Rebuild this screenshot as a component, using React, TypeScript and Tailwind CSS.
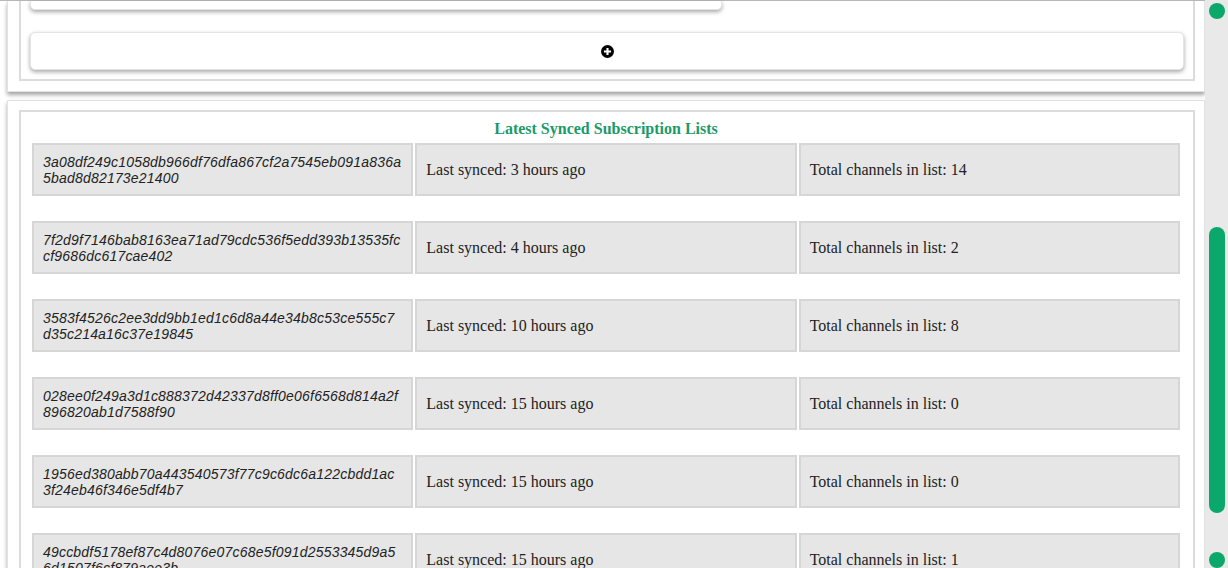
import React from 'react';

type SyncedList = {
  hash: [string, string];
  synced: string;
  channels: number;
};

const lists: SyncedList[] = [
  { hash: ['3a08df249c1058db966df76dfa867cf2a7545eb091a836a', '5bad8d82173e21400'], synced: '3 hours ago', channels: 14 },
  { hash: ['7f2d9f7146bab8163ea71ad79cdc536f5edd393b13535fc', 'cf9686dc617cae402'], synced: '4 hours ago', channels: 2 },
  { hash: ['3583f4526c2ee3dd9bb1ed1c6d8a44e34b8c53ce555c7', 'd35c214a16c37e19845'], synced: '10 hours ago', channels: 8 },
  { hash: ['028ee0f249a3d1c888372d42337d8ff0e06f6568d814a2f', '896820ab1d7588f90'], synced: '15 hours ago', channels: 0 },
  { hash: ['1956ed380abb70a443540573f77c9c6dc6a122cbdd1ac', '3f24eb46f346e5df4b7'], synced: '15 hours ago', channels: 0 },
  { hash: ['49ccbdf5178ef87c4d8076e07c68e5f091d2553345d9a5', '6d1507f6cf879aee3b'], synced: '15 hours ago', channels: 1 },
];

const PlusCircle: React.FC = () => (
  <svg width="13" height="13" viewBox="0 0 16 16" aria-hidden="true">
    <circle cx="8" cy="8" r="8" fill="#000" />
    <path d="M8 3.6v8.8M3.6 8h8.8" stroke="#fff" strokeWidth="2.6" />
  </svg>
);

const cell = 'flex-1 min-w-0 flex items-center bg-[#e6e6e6] border-2 border-[#d6d6d6] pl-[9px] pr-2';

const App: React.FC = () => {
  return (
    <div className="flex h-[568px] overflow-hidden bg-white">
      <div className="flex-1 min-w-0 border-t border-[#b9b9b9]">
        {/* Channel list panel, scrolled mostly out of view */}
        <div className="ml-[7px] border-x border-b border-[#e2e2e2] bg-white pb-[10px] shadow-[0_3px_4px_rgba(0,0,0,0.35)]">
          <div className="ml-[11px] mr-[9px] border-x-2 border-b-2 border-[#dcdcdc] pl-[9px] pr-[9px] pb-[9px]">
            <div className="h-[9px] w-[692px] rounded-b-[5px] border-x border-b border-[#e4e4e4] bg-white shadow-[0_2px_4px_rgba(0,0,0,0.35)]" />
            <button className="mt-[22px] flex h-[38px] w-full items-center justify-center rounded-[5px] border border-[#e4e4e4] bg-white shadow-[0_2px_4px_rgba(0,0,0,0.35)]">
              <PlusCircle />
            </button>
          </div>
        </div>

        {/* Latest synced lists */}
        <div className="ml-[7px] mt-[8px] border border-[#e2e2e2] bg-white pt-[9px] shadow-[0_3px_4px_rgba(0,0,0,0.35)]">
          <div className="ml-[11px] mr-[9px] border-2 border-[#dcdcdc] pl-[11px] pr-[13px]">
            <h2 className="pt-[8px] mb-[5px] text-center text-[16px] leading-[18px] font-bold text-[#1b9a69] font-['Liberation_Serif',serif]">
              Latest Synced Subscription Lists
            </h2>
            {lists.map((item) => (
              <div key={item.hash[0]} className="mb-[25px] flex h-[53px] gap-[2px]">
                <div className={`${cell} font-['Liberation_Sans',Arial,sans-serif] text-[14px] leading-[16px] italic tracking-[0.2px] text-[#222]`}>
                  <div>
                    <div className="whitespace-nowrap">{item.hash[0]}</div>
                    <div className="whitespace-nowrap">{item.hash[1]}</div>
                  </div>
                </div>
                <div className={`${cell} font-['Liberation_Serif',serif] text-[16px] text-[#222]`}>
                  Last synced: {item.synced}
                </div>
                <div className={`${cell} font-['Liberation_Serif',serif] text-[16px] text-[#222]`}>
                  Total channels in list: {item.channels}
                </div>
              </div>
            ))}
          </div>
        </div>
      </div>

      {/* Custom scrollbar */}
      <div className="flex w-[23px] shrink-0 flex-col items-center bg-[#e9e9e9] pt-[3px]">
        <div className="h-[16px] w-[16px] rounded-full bg-[#0aa86a]" />
        <div className="mt-[208px] h-[286px] w-[16px] rounded-full bg-[#0aa86a]" />
        <div className="mt-[39px] h-[16px] w-[16px] rounded-full bg-[#0aa86a]" />
      </div>
    </div>
  );
};

export default App;
